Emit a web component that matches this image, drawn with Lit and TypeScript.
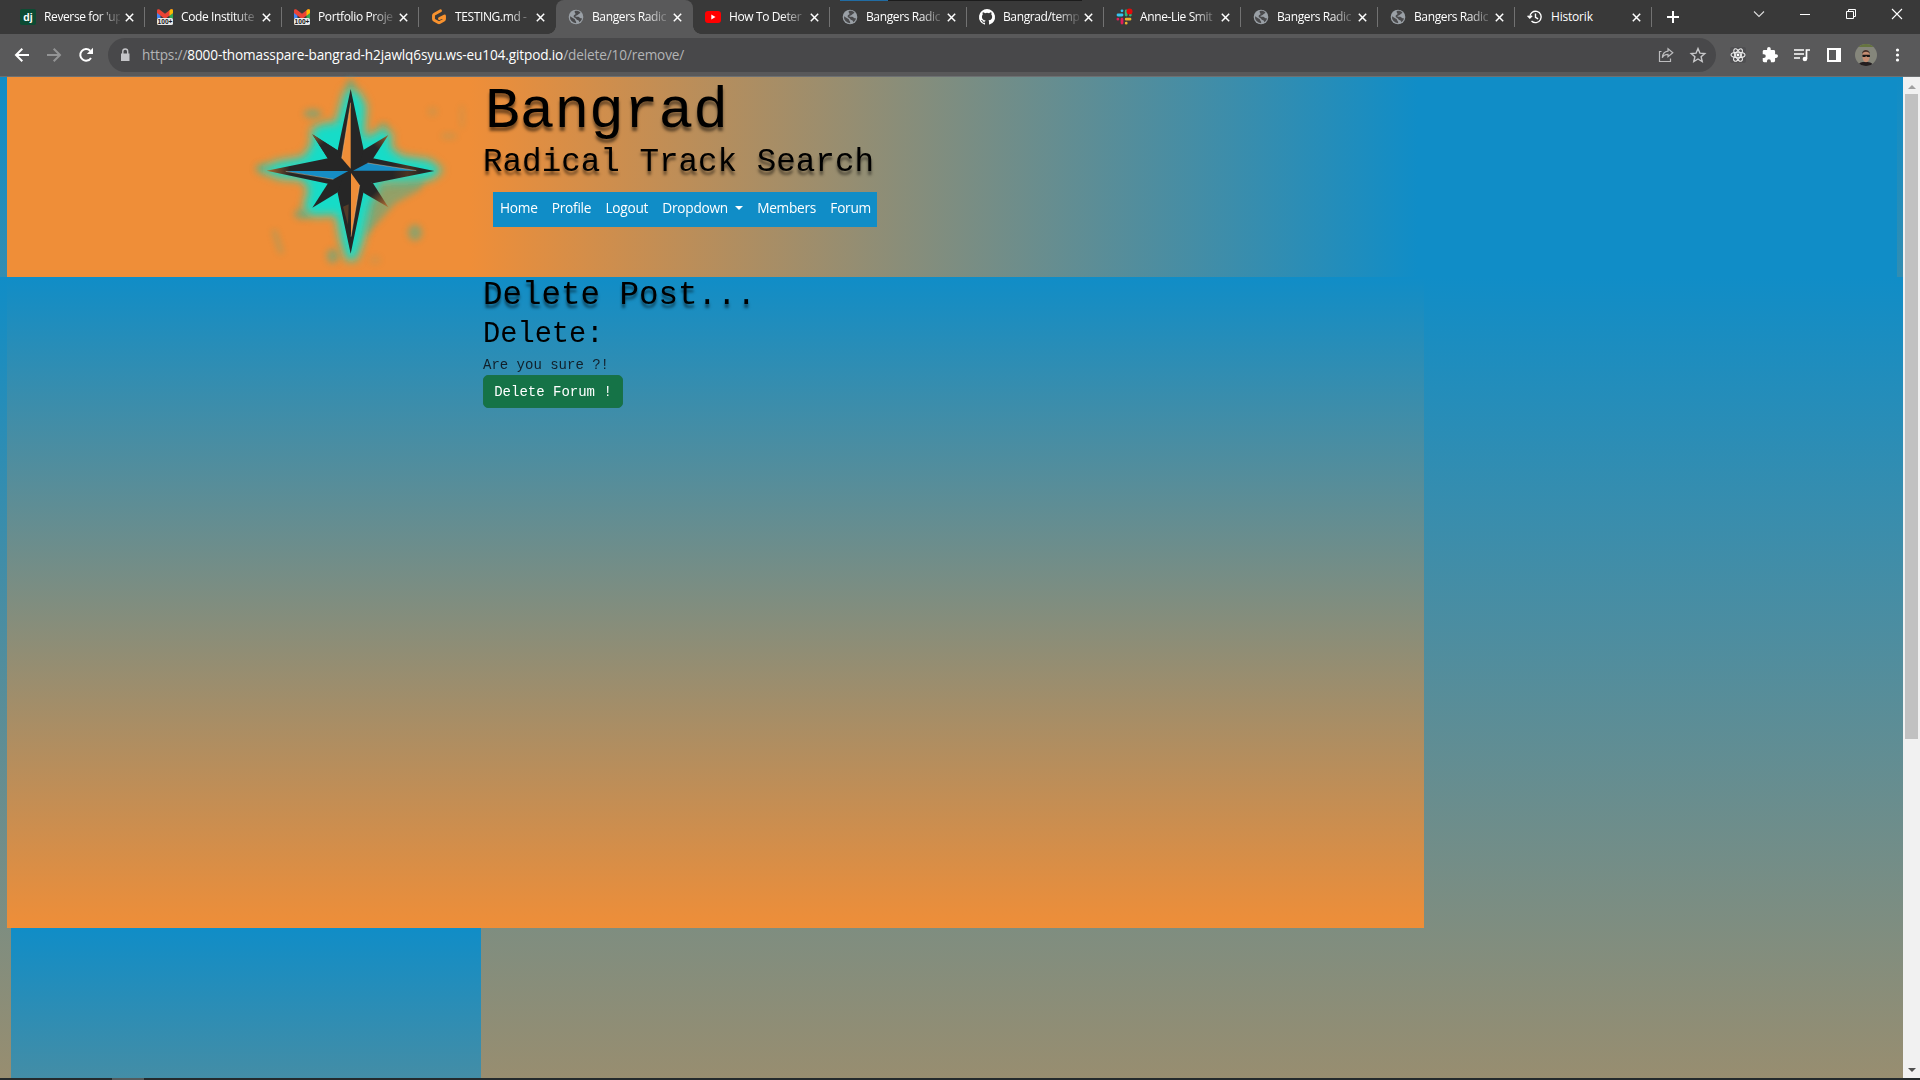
import { LitElement, html, css, svg } from "lit";
import { customElement, property } from "lit/decorators.js";

const globe = svg`<circle cx="8" cy="8" r="7.300" fill="#9aa0a6"/><path d="M2 7.200L6.800 10.300C7 12 8.500 12.200 8.200 14.200A6.200 6.200 0 0 1 2 7.200zM6.600 2.200c2-.8 4.500-.2 5.800 1.300-.2 1.300-1.800 1-2.200 1.900-.4 1-2.800.7-2.800 2 1 .9 3.600-.4 4.100 1.200.5.9 1.800.7 2.500.9-.5 1.700-1.400 2.900-2.800 3.800.1-1.500-.6-2.300-1.900-2.400-1.200-.3-1-1.500-2.100-1.900-1.300-.3-1.900-1.300-1.400-2.400.4-.9 1.500-.7 1.700-1.600.2-.9-1.100-1-.9-2.800z" fill="#4a4a4c"/>`;
const gmail = svg`<path d="M0 1.500v8h3.500V5z" fill="#4285f4"/><path d="M16 1.500v8h-3.500V5z" fill="#34a853"/><path d="M0 1.500C0 .3 1.500-.2 2.500.6L8 4.700 13.500.6C14.500-.2 16 .3 16 1.500V4L8 10 0 4z" fill="#ea4335"/><path d="M12.500 1.400l1-.8C14.500-.2 16 .3 16 1.500V4l-3.500 2.700z" fill="#fbbc04"/><rect x="0" y="9" width="16" height="7" rx="1.500" fill="#e8e8e8"/><text x="0.500" y="15.300" font-size="7.500" font-weight="700" textLength="15" lengthAdjust="spacingAndGlyphs" fill="#1c1c1c">100+</text>`;
const icons: Record<string, unknown> = {
  dj: svg`<rect width="16" height="16" rx="2" fill="#0c4b33"/><text x="8" y="11.500" font-size="10.500" font-weight="700" text-anchor="middle" fill="#fff">dj</text>`,
  gmail,
  gitpod: svg`<path d="M9.500 1.800L3.300 5.200a1.500 1.500 0 0 0-.8 1.300v3.400c0 .5.3 1 .8 1.300l4 2.300c.4.2 1 .2 1.400 0l4-2.300c.5-.3.8-.8.8-1.300V7L8.500 9.500" fill="none" stroke="#f8922e" stroke-width="2.900" stroke-linejoin="round" stroke-linecap="round"/>`,
  globe,
  youtube: svg`<rect x="0" y="2" width="16" height="12" rx="3" fill="#f00"/><path d="M6.300 5.500v5l4.200-2.500z" fill="#fff"/>`,
  github: svg`<path fill="#fff" d="M8 0a8 8 0 0 0-2.530 15.590c.4.070.55-.17.55-.38v-1.490c-2.010.37-2.530-.49-2.690-.940-.09-.23-.48-.94-.82-1.130-.28-.15-.68-.52-.01-.53.63-.01 1.080.58 1.230.82.72 1.210 1.870.87 2.330.66.07-.52.28-.87.51-1.070-1.780-.2-3.640-.89-3.640-3.950 0-.87.31-1.590.82-2.150-.08-.2-.36-1.020.08-2.120 0 0 .67-.21 2.200.82a7.500 7.500 0 0 1 4 0c1.530-1.040 2.200-.82 2.200-.82.44 1.100.16 1.920.08 2.120.51.56.82 1.270.82 2.150 0 3.070-1.870 3.750-3.650 3.950.29.25.54.73.54 1.480v2.200c0 .21.15.46.55.38A8 8 0 0 0 8 0z"/>`,
  slack: svg`<g stroke-width="2.800" stroke-linecap="round"><path d="M6 1.800v0M2 6h4" stroke="#36c5f0"/><path d="M10.200 2v4M14.300 6v0" stroke="#2eb67d"/><path d="M10.200 10.200H14M10.200 14.200v0" stroke="#ecb22e"/><path d="M6 10.200V14M1.900 10.200v0" stroke="#e01e5a"/></g><circle cx="13.500" cy="2.500" r="3" fill="#e00b0b"/>`,
  history: svg`<path d="M2.800 8a5.700 5.700 0 1 1 1.700 4M0.600 6.700L2.800 9 5.100 6.700M8.500 4.500V8.300l2.600 1.600" fill="none" stroke="#fff" stroke-width="1.400"/>`,
};

const tabs = [
  { icon: "dj", title: "Reverse for 'up" },
  { icon: "gmail", title: "Code Institute" },
  { icon: "gmail", title: "Portfolio Proje" },
  { icon: "gitpod", title: "TESTING.md -", plain: true },
  { icon: "globe", title: "Bangers Radic", active: true },
  { icon: "youtube", title: "How To Deter" },
  { icon: "globe", title: "Bangers Radic" },
  { icon: "github", title: "Bangrad/temp" },
  { icon: "slack", title: "Anne-Lie Smit" },
  { icon: "globe", title: "Bangers Radic" },
  { icon: "globe", title: "Bangers Radic" },
  { icon: "history", title: "Historik", short: true },
];

@customElement("browser-tab")
class BrowserTab extends LitElement {
  @property() icon = "";
  @property() title = "";
  @property({ type: Boolean, reflect: true }) short = false;
  static styles = css`
    :host { display: flex; align-items: center; box-sizing: border-box; height: 34px; padding-left: 12px; position: relative; color: #fff; font: 12px "Open Sans", sans-serif; }
    .icon { width: 16px; height: 16px; flex: none; overflow: visible; }
    .label { width: 76px; margin-left: 8px; white-space: nowrap; letter-spacing: -0.38px; line-height: 20px; -webkit-mask-image: linear-gradient(to right, #000 70%, rgba(0, 0, 0, 0.12)); }
    :host([short]) .label { -webkit-mask-image: none; letter-spacing: -0.2px; }
    .close { width: 9px; height: 9px; margin-left: 5px; flex: none; }
  `;
  render() {
    return html`<svg class="icon" viewBox="0 0 16 16" font-family="Liberation Sans, sans-serif">${icons[this.icon]}</svg>
      <span class="label">${this.title}</span>
      <svg class="close" viewBox="0 0 9 9"><path d="M.8.8l7.400 7.400M8.200.8L.8 8.200" stroke="#fff" stroke-width="1.500"/></svg>`;
  }
}

@customElement("app-root")
class AppRoot extends LitElement {
  static styles = css`
    :host { display: flex; flex-direction: column; width: 1920px; height: 1080px; overflow: hidden; font-family: "Open Sans", "Noto Sans", sans-serif; }
    * { box-sizing: border-box; }
    svg { display: block; flex: none; overflow: visible; }
    .strip { display: flex; height: 34px; background: #393939; padding-left: 8px; position: relative; flex: none; }
    .strip::before { content: ""; position: absolute; left: 840px; top: 0; width: 242px; height: 1px; background: linear-gradient(to right, #216ca3 48px, #1c1c1c 48px); }
    .tab { width: 137px; position: relative; flex: none; }
    .tab.sep::after { content: ""; position: absolute; right: 0; top: 7px; width: 1px; height: 20px; background: #727272; }
    .tab.active { background: #59595a; border-radius: 8px 8px 0 0; }
    .tab.active::before, .tab.active::after { content: ""; position: absolute; bottom: 0; width: 8px; height: 8px; }
    .tab.active::before { left: -8px; background: radial-gradient(circle at 0 0, transparent 7.500px, #59595a 8px); }
    .tab.active::after { right: -8px; background: radial-gradient(circle at 100% 0, transparent 7.500px, #59595a 8px); }
    .plus { margin: 11px 0 0 15px; }
    .window { display: flex; margin-left: auto; padding-top: 6px; }
    .window svg { margin-right: 30px; }
    .window svg:last-child { margin-right: 15px; }
    .toolbar { display: flex; align-items: center; height: 43px; flex: none; background: #59595a; border-bottom: 1px solid #6d7072; padding: 0 12px 0 14px; }
    .arrows { display: flex; gap: 16px; width: 94px; flex: none; }
    .omnibox { display: flex; align-items: center; height: 34px; width: 1608px; border-radius: 17px; background: #48484a; padding: 0 10px 0 9px; margin-top: -1px; flex: none; }
    .url { margin-left: 9px; color: #b3b4b6; font-size: 13.600px; line-height: 20px; letter-spacing: -0.13px; white-space: nowrap; flex: 1; }
    .url b { font-weight: 400; color: #fff; }
    .omnibox svg + svg { margin-left: 16px; }
    .extras { display: flex; align-items: center; margin-left: 14px; gap: 16px; }
    .avatar { margin: 0 -1px 0 -3px; }
    .view { display: flex; height: 1001px; flex: none; }
    .page { width: 1903px; flex: none; background: linear-gradient(to bottom, #108dc7, #ef8e38) 0 200px / 100% 1313px no-repeat, linear-gradient(to bottom, #108dc7, #ef8e38) 0 0 / 100% 1313px no-repeat; }
    .hero { display: flex; height: 200px; margin: 0 6px 0 7px; padding-left: 233px; background: linear-gradient(to right, #ef8e38 463px, #108dc7 1411px); }
    .brand { padding-left: 3px; }
    .mono { font-family: "Liberation Mono", monospace; color: #000; font-weight: 400; margin: 0; white-space: nowrap; }
    .shadow { text-shadow: 0 4px 3px rgba(0, 0, 0, 0.5); }
    .title { font-size: 58px; line-height: 69px; margin-left: 2px; height: 68px; letter-spacing: -0.1px; }
    .sub { font-size: 32.600px; line-height: 35px; height: 34px; }
    .nav { display: flex; width: 384px; height: 35px; margin: 13px 0 0 10px; padding: 0 6px 3px 7px; background: #108dc7; color: #fff; font-size: 13.700px; align-items: center; justify-content: space-between; line-height: 20px; letter-spacing: -0.27px; }
    .drop { display: flex; align-items: center; gap: 7px; }
    .caret { border: 4px solid transparent; border-top-color: #fff; border-bottom: 0; }
    .main { width: 1417px; height: 651px; margin-left: 7px; padding-left: 476px; background: linear-gradient(to bottom, #108dc7, #ef8e38); }
    .h2 { font-size: 32.500px; line-height: 37px; height: 36px; }
    .h3 { font-size: 28.700px; line-height: 43px; }
    .ask { font-size: 14px; line-height: 19px; color: #11202b; }
    .btn { display: flex; align-items: center; justify-content: center; width: 140px; height: 33px; border-radius: 5px; background: #157347; border: 1px solid #1a7049; color: #fff; font-size: 14px; padding: 0; }
    .side { width: 470px; height: 150px; margin-left: 11px; background: linear-gradient(to bottom, #108dc7, #ef8e38) 0 0 / 100% 651px; }
    .scroll { width: 17px; display: flex; flex-direction: column; align-items: center; background: #f1f1f1; padding: 8px 0 6px; }
    .up { border: 4px solid transparent; border-bottom-color: #a0a0a0; border-top: 0; }
    .thumb { width: 13px; height: 645px; margin-top: 5px; background: #c1c1c1; }
    .down { margin-top: auto; border: 4px solid transparent; border-top-color: #505050; border-bottom: 0; }
    .edge { height: 2px; flex: none; background: linear-gradient(to right, #242a2c 112px, #525b5d 112px, #525b5d 144px, #242a2c 144px); }
  `;

  private compass() {
    return svg`<svg width="240" height="200" viewBox="0 21 720 600">
      <defs>
        <filter id="glow" x="-30%" y="-30%" width="160%" height="160%"><feGaussianBlur stdDeviation="14"/></filter>
        <filter id="haze" x="-80%" y="-80%" width="260%" height="260%"><feGaussianBlur stdDeviation="10"/></filter>
        <linearGradient id="rust"><stop offset="0" stop-color="#b06a2e"/><stop offset=".14" stop-color="#262626"/><stop offset=".75" stop-color="#262626"/><stop offset=".84" stop-color="#4a3423"/><stop offset=".92" stop-color="#262626"/></linearGradient>
        <linearGradient id="tip" x1="445" y1="410" x2="405" y2="365" gradientUnits="userSpaceOnUse"><stop offset="0" stop-color="#b66f32"/><stop offset="1" stop-color="#262626"/></linearGradient>
        <linearGradient id="tip2" x1="445" y1="195" x2="410" y2="235" gradientUnits="userSpaceOnUse"><stop offset="0" stop-color="#95602f"/><stop offset="1" stop-color="#262626"/></linearGradient>
        <linearGradient id="tip3" x1="217" y1="193" x2="245" y2="225" gradientUnits="userSpaceOnUse"><stop offset="0" stop-color="#95602f"/><stop offset="1" stop-color="#262626"/></linearGradient>
      </defs>
      <g filter="url(#haze)" fill="#62aa82" opacity=".65">
        <ellipse cx="218" cy="131" rx="27" ry="14"/><ellipse cx="332" cy="48" rx="14" ry="22"/><ellipse cx="525" cy="488" rx="21" ry="24"/>
        <ellipse cx="278" cy="558" rx="18" ry="22"/><path d="M95 480l22 70 14 0-22-70z" opacity=".6"/><ellipse cx="627" cy="198" rx="24" ry="10" opacity=".35"/>
        <ellipse cx="578" cy="125" rx="14" ry="14" opacity=".3"/><ellipse cx="666" cy="140" rx="5" ry="38" opacity=".35"/><ellipse cx="187" cy="432" rx="25" ry="16"/>
        <ellipse cx="68" cy="295" rx="22" ry="12"/><ellipse cx="430" cy="170" rx="14" ry="14" opacity=".6"/>
        <path d="M370 350L560 320 540 360 465 400 430 440 375 500z"/><ellipse cx="405" cy="570" rx="18" ry="12" opacity=".25"/>
      </g>
      <path filter="url(#glow)" fill="#12dcc8" d="M316 60l36 0 26 45-6 98 22-8 38-24 24 24-4 38 34 26 84 12 38 30-34 26-84 8-70 4-30 70-20 100-22 62-28 0-18-60-14-76-74 4-24-24 16-60-22-26-64-4-66-26 56-24 80-14 24-36 2-50 40-16 32 0 14-50z"/>
      <path fill="#262626" d="M217 193L295 242 332 302 264 266z"/><path fill="url(#tip3)" d="M217 193L295 242 332 302 264 266z"/>
      <path fill="url(#tip2)" d="M445 195L370 240 332 302 399 266z"/>
      <path fill="#262626" d="M217 413L295 366 332 302 264 340z"/>
      <path fill="url(#tip)" d="M445 412L370 368 332 302 399 340z"/>
      <path fill="url(#rust)" d="M80 302L264 265 332 290 399 265 583 303 399 340 332 320 264 341z"/>
      <path fill="#262626" d="M332 57L371 240 351 302 370 369 332 551 293 369 315 302 293 240z"/>
      <path fill="#ef8e38" d="M332 98V296L305 265z"/><path fill="#ef8e38" d="M333 309L359 345 333 500z"/>
      <path fill="#168dc5" d="M137 303H325L280 328z"/><path fill="#168dc5" d="M339 302L383 279 529 302z"/>
      <path d="M332 98L305 265M137 304L280 328M383 279L529 302M359 345L333 500" stroke="#f6c99b" stroke-width="1.300" fill="none"/>
      <path d="M309 410l15 55 2-62z" fill="#a7652e" opacity=".35"/>
    </svg>`;
  }

  render() {
    return html`
      <div class="strip">
        ${tabs.map((t) => html`<browser-tab class="tab ${t.active ? "active" : t.plain || t.icon === "youtube" && false ? "" : "sep"}" .icon=${t.icon} .title=${t.title} ?short=${t.short}></browser-tab>`)}
        <svg class="plus" width="12" height="12" viewBox="0 0 12 12"><path d="M6 0v12M0 6h12" stroke="#fff" stroke-width="2"/></svg>
        <div class="window">
          <svg width="16" height="16" viewBox="0 0 16 16"><path d="M3 5.500l5 5 5-5" fill="none" stroke="#ddd" stroke-width="1.100"/></svg>
          <svg width="16" height="16" viewBox="0 0 16 16"><path d="M3 8.500h10" stroke="#fff"/></svg>
          <svg width="16" height="16" viewBox="0 0 16 16"><path d="M3.500 5.500h7v7h-7zM5.500 5.500v-2h7v7h-2" fill="none" stroke="#fff"/></svg>
          <svg width="16" height="16" viewBox="0 0 16 16"><path d="M3 3l10 10M13 3L3 13" stroke="#fff" stroke-width="1.100"/></svg>
        </div>
      </div>
      <div class="toolbar">
        <div class="arrows">
          <svg width="16" height="16" viewBox="0 0 16 16"><path d="M15 8H2M8.300 1.700L2 8l6.300 6.300" fill="none" stroke="#fff" stroke-width="2"/></svg>
          <svg width="16" height="16" viewBox="0 0 16 16"><path d="M1 8h13M7.700 1.700L14 8l-6.300 6.300" fill="none" stroke="#939495" stroke-width="2"/></svg>
          <svg width="16" height="16" viewBox="0 0 16 16"><path d="M13 11a5.800 5.800 0 1 1-.8-7.200" fill="none" stroke="#fff" stroke-width="2"/><path d="M15 .8V7H8.800z" fill="#fff"/></svg>
        </div>
        <div class="omnibox">
          <svg width="16" height="16" viewBox="0 0 16 16"><path d="M4 6.500h8.500V14H4z" fill="#c5c5c8"/><path d="M5.800 7V4.500a2.450 2.450 0 0 1 4.900 0V7" fill="none" stroke="#c5c5c8" stroke-width="1.400"/></svg>
          <span class="url">https://<b>8000-thomasspare-bangrad-h2jawlq6syu.ws-eu104.gitpod.io</b>/delete/10/remove/</span>
          <svg width="16" height="16" viewBox="0 0 16 16"><path d="M3.500 4.500H1.500v10h11v-3M10 1.700l4.800 4-4.800 4V7.300C7 7.300 5.200 8.500 4.300 10.800 4.600 7 6.500 4.600 10 4.200z" fill="none" stroke="#bcbcbe" stroke-width="1.200"/></svg>
          <svg width="16" height="16" viewBox="0 0 16 16"><path d="M8 1.600l1.900 4.500 4.900.4-3.700 3.200 1.100 4.800L8 12l-4.200 2.500 1.100-4.800L1.200 6.500l4.900-.4z" fill="none" stroke="#c8c8ca" stroke-width="1.400"/></svg>
        </div>
        <div class="extras">
          <svg width="16" height="16" viewBox="0 0 16 16"><rect width="16" height="16" rx="2" fill="#505052"/><g fill="none" stroke="#eee" stroke-width="1.100"><ellipse cx="8" cy="8" rx="7" ry="2.700"/><ellipse cx="8" cy="8" rx="7" ry="2.700" transform="rotate(60 8 8)"/><ellipse cx="8" cy="8" rx="7" ry="2.700" transform="rotate(120 8 8)"/></g><circle cx="8" cy="8" r="1.400" fill="#fff"/></svg>
          <svg width="16" height="16" viewBox="1 1 22 22"><path fill="#fff" d="M20.500 11H19V7a2 2 0 0 0-2-2h-4V3.500a2.500 2.500 0 0 0-5 0V5H4a2 2 0 0 0-2 2v3.800h1.500a2.700 2.700 0 0 1 0 5.400H2V20a2 2 0 0 0 2 2h3.800v-1.500a2.700 2.700 0 0 1 5.400 0V22H17a2 2 0 0 0 2-2v-4h1.500a2.500 2.500 0 0 0 0-5z"/></svg>
          <svg width="16" height="16" viewBox="0 0 16 16"><path d="M0 3h10M0 7h10M0 11h6M12.500 12V3h3.500" fill="none" stroke="#fff" stroke-width="1.700"/><circle cx="10.900" cy="12" r="2.300" fill="#fff"/></svg>
          <svg width="16" height="16" viewBox="0 0 16 16"><path d="M2 2h12v12H2z" fill="none" stroke="#fff" stroke-width="2"/><path d="M10 2h4v12h-4z" fill="#fff"/></svg>
          <svg class="avatar" width="22" height="22" viewBox="0 0 22 22"><defs><clipPath id="face"><circle cx="11" cy="11" r="11"/></clipPath></defs><g clip-path="url(#face)"><path fill="#85867b" d="M0 0h22v22H0z"/><path fill="#65743f" d="M0 0h22v3H0z"/><path fill="#231e20" d="M3 22c1-4 4-4 7-4s8 0 8 4z"/><ellipse cx="11" cy="12" rx="3.700" ry="6.200" fill="#c58d72"/><path fill="#44312a" d="M7 10c0-5.500 7.500-5.500 8 0-2-3-6-3-8 0z"/><path fill="#151515" d="M7.300 10.700h7.600v2.200h-2.800l-1-.9-1 .9H7.600z"/></g></svg>
          <svg width="16" height="16" viewBox="0 0 16 16"><g fill="#fff"><circle cx="5.500" cy="3" r="1.600"/><circle cx="5.500" cy="8" r="1.600"/><circle cx="5.500" cy="13" r="1.600"/></g></svg>
        </div>
      </div>
      <div class="view">
        <div class="page">
          <header class="hero">
            ${this.compass()}
            <div class="brand">
              <h1 class="mono title shadow">Bangrad</h1>
              <h2 class="mono sub shadow">Radical Track Search</h2>
              <nav class="nav"><span>Home</span><span>Profile</span><span>Logout</span><span class="drop">Dropdown<i class="caret"></i></span><span>Members</span><span>Forum</span></nav>
            </div>
          </header>
          <main class="main">
            <h2 class="mono h2 shadow">Delete Post...</h2>
            <h3 class="mono h3">Delete:</h3>
            <p class="mono ask">Are you sure ?!</p>
            <button class="mono btn">Delete Forum !</button>
          </main>
          <div class="side"></div>
        </div>
        <div class="scroll"><i class="up"></i><div class="thumb"></div><i class="down"></i></div>
      </div>
      <div class="edge"></div>`;
  }
}
